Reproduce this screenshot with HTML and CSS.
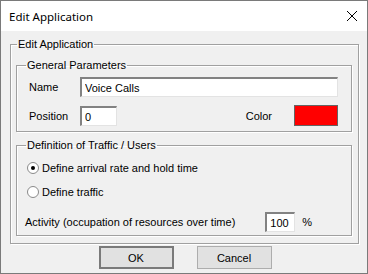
FILE: index.html
```html
<!DOCTYPE html>
<html lang="en">
<head>
    <meta charset="UTF-8">
    <title>Edit Application</title>
    <link rel="stylesheet" href="styles.css">
</head>
<body>

    <div class="window">
        <div class="titlebar">
            <span class="title">Edit Application</span>
            <span class="close">
                <svg width="10" height="10" viewBox="0 0 10 10">
                    <path d="M0 0 L10 10 M10 0 L0 10" stroke="#000" stroke-width="1" fill="none"/>
                </svg>
            </span>
        </div>

        <div class="content">
            <fieldset class="group outer">
                <legend>Edit Application</legend>

                <fieldset class="group general">
                    <legend>General Parameters</legend>
                    <div class="row name-row">
                        <label class="label">Name</label>
                        <input type="text" class="textbox name-box" value="Voice Calls">
                    </div>
                    <div class="row position-row">
                        <label class="label">Position</label>
                        <input type="text" class="textbox position-box" value="0">
                        <span class="spacer"></span>
                        <label class="color-label">Color</label>
                        <span class="swatch"></span>
                    </div>
                </fieldset>

                <fieldset class="group traffic">
                    <legend>Definition of Traffic / Users</legend>
                    <div class="radio-row">
                        <span class="radio checked"></span>
                        <span>Define arrival rate and hold time</span>
                    </div>
                    <div class="radio-row">
                        <span class="radio"></span>
                        <span>Define traffic</span>
                    </div>
                    <div class="row activity-row">
                        <span>Activity (occupation of resources over time)</span>
                        <input type="text" class="textbox activity-box" value="100">
                        <span class="percent">%</span>
                    </div>
                </fieldset>
            </fieldset>

            <div class="buttons">
                <button class="button default">OK</button>
                <button class="button">Cancel</button>
            </div>
        </div>
    </div>

</body>
</html>
```

FILE: styles.css
```css
body {
    margin: 0;
    font-family: "Liberation Sans", Arial, sans-serif;
    font-size: 11px;
    color: #000;
}

.window {
    width: 368px;
    height: 274px;
    box-sizing: border-box;
    border: 1px solid #7a7a7a;
    background-color: #f0f0f0;
    display: flex;
    flex-direction: column;
}

.titlebar {
    height: 30px;
    flex-shrink: 0;
    background-color: #fff;
    display: flex;
    align-items: center;
    justify-content: space-between;
    padding: 0 10px 0 8px;
}

.title {
    font-family: "Noto Sans", sans-serif;
    font-size: 11.5px;
}

.close {
    display: flex;
}

.content {
    padding: 7px 8px 0 9px;
}

.group {
    margin: 0;
    padding: 0 8px 5px 8px;
    border: 1px solid #a0a0a0;
    box-shadow: 1px 1px 0 #fff, inset 1px 1px 0 #fff;
}

.group legend {
    padding: 0 1px;
    margin-left: -1px;
}

.general legend {
    margin-left: 0;
}

.outer {
    padding: 9px 6px 7px 5px;
}

.outer legend {
    margin-left: 1px;
}

.traffic {
    margin-top: 7px;
    padding-bottom: 3px;
}

.row {
    display: flex;
    align-items: center;
}

.label {
    width: 51px;
    padding-left: 4px;
}

.name-row {
    margin-top: 6px;
}

.position-row {
    margin-top: 8px;
}

.textbox {
    box-sizing: border-box;
    height: 20px;
    padding: 1px 3px 0 3px;
    font: inherit;
    border: 1px solid #828282;
    border-right-color: #e3e3e3;
    border-bottom-color: #e3e3e3;
    border-top-width: 2px;
    border-left-width: 2px;
    background-color: #fff;
}

.name-box {
    flex: 1;
    margin-right: 5px;
}

.position-box {
    width: 37px;
}

.spacer {
    flex: 1;
}

.color-label {
    margin-right: 22px;
}

.swatch {
    width: 44px;
    height: 21px;
    box-sizing: border-box;
    border: 1px solid #646464;
    background-color: #f00;
    margin-right: 5px;
}

.radio-row {
    display: flex;
    align-items: center;
    gap: 3px;
    margin-left: 2px;
    margin-top: 9px;
    height: 16px;
}

.radio-row + .radio-row {
    margin-top: 8px;
}

.radio {
    width: 12px;
    height: 12px;
    box-sizing: border-box;
    border-radius: 50%;
    border: 1px solid #8a8a8a;
    background-color: #fff;
    position: relative;
}

.radio.checked::after {
    content: "";
    position: absolute;
    left: 3px;
    top: 3px;
    width: 4px;
    height: 4px;
    border-radius: 50%;
    background-color: #000;
}

.activity-row {
    margin-top: 12px;
}

.activity-box {
    width: 30px;
    margin-left: 30px;
}

.percent {
    margin-left: 7px;
}

.buttons {
    display: flex;
    justify-content: center;
    gap: 23px;
    margin-top: 2px;
    padding-left: 1px;
}

.button {
    width: 75px;
    height: 23px;
    font: inherit;
    background-color: #e1e1e1;
    border: 1px solid #adadad;
}

.button.default {
    border: 2px solid #7a7a7a;
}
```
